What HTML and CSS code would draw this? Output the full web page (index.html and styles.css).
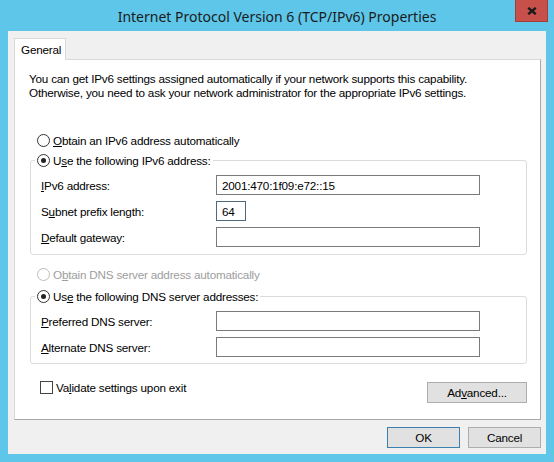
FILE: index.html
```html
<!DOCTYPE html>
<html lang="en">
<head>
  <meta charset="UTF-8">
  <title>Internet Protocol Version 6 (TCP/IPv6) Properties</title>
  <link rel="stylesheet" href="styles.css">
</head>
<body>
  <div class="window">
    <div class="titlebar">
      <h1 class="title">Internet Protocol Version 6 (TCP/IPv6) Properties</h1>
      <button class="close" title="Close">
        <svg width="10" height="8" viewBox="0 0 10 8"><path d="M1.2 0.8 L8.8 7.2 M8.8 0.8 L1.2 7.2" stroke="#1b1b1b" stroke-width="2.4" fill="none"/></svg>
      </button>
    </div>

    <div class="client">
      <div class="tabs">
        <div class="tab">General</div>
      </div>

      <div class="panel">
        <p class="intro">You can get IPv6 settings assigned automatically if your network supports this capability.<br>Otherwise, you need to ask your network administrator for the appropriate IPv6 settings.</p>

        <div class="option first"><span class="radio"></span><span><u>O</u>btain an IPv6 address automatically</span></div>

        <fieldset class="group">
          <legend><span class="option"><span class="radio checked"></span><span>U<u>s</u>e the following IPv6 address:</span></span></legend>
          <div class="fields">
            <div class="field"><label><u>I</u>Pv6 address:</label><input class="text" type="text" value="2001:470:1f09:e72::15"></div>
            <div class="field"><label>S<u>u</u>bnet prefix length:</label><input class="text short focus" type="text" value="64"></div>
            <div class="field"><label><u>D</u>efault gateway:</label><input class="text" type="text" value=""></div>
          </div>
        </fieldset>

        <div class="option dns disabled"><span class="radio"></span><span>O<u>b</u>tain DNS server address automatically</span></div>

        <fieldset class="group dns-group">
          <legend><span class="option"><span class="radio checked"></span><span>Us<u>e</u> the following DNS server addresses:</span></span></legend>
          <div class="fields">
            <div class="field"><label><u>P</u>referred DNS server:</label><input class="text" type="text" value=""></div>
            <div class="field"><label><u>A</u>lternate DNS server:</label><input class="text" type="text" value=""></div>
          </div>
        </fieldset>

        <div class="footer-row">
          <div class="option check-row"><span class="checkbox"></span><span>Va<u>l</u>idate settings upon exit</span></div>
          <button class="btn advanced">Ad<u>v</u>anced...</button>
        </div>
      </div>

      <div class="buttons">
        <button class="btn default">OK</button>
        <button class="btn">Cancel</button>
      </div>
    </div>
  </div>
</body>
</html>
```

FILE: styles.css
```css
body {
  margin: 0;
  background: #5ec6e9;
  font-family: "Liberation Sans", Arial, sans-serif;
  font-size: 11.7px;
  letter-spacing: -0.2px;
  color: #000;
}

.window {
  width: 554px;
  height: 462px;
  display: flex;
  flex-direction: column;
}

/* title bar */
.titlebar {
  height: 31px;
  flex-shrink: 0;
  display: grid;
  grid-template-columns: 1fr auto 1fr;
}
.title {
  grid-column: 2;
  align-self: center;
  margin: 2px 0 0;
  font-family: "Noto Sans", sans-serif;
  font-size: 14px;
  font-weight: 400;
  letter-spacing: 0;
  color: #1b1b1b;
}
.close {
  grid-column: 3;
  justify-self: end;
  align-self: start;
  width: 33px;
  height: 22px;
  margin-right: 6px;
  padding: 0;
  background: #c7504b;
  border: 1px solid #a23d39;
  border-top: none;
  display: flex;
  align-items: center;
  justify-content: center;
}

/* dialog body */
.client {
  flex: 1;
  margin: 0 8px 8px;
  padding: 7px 5px 6px 6px;
  background: #f0f0f0;
  display: flex;
  flex-direction: column;
}

.tabs {
  display: flex;
}
.tab {
  position: relative;
  z-index: 1;
  width: 52px;
  height: 22px;
  box-sizing: border-box;
  margin-bottom: -1px;
  padding-left: 6px;
  line-height: 21px;
  background: #fff;
  border: 1px solid #d9d9d9;
  border-bottom: none;
}

.panel {
  height: 361px;
  box-sizing: border-box;
  padding: 12px 13px 0 14px;
  background: #fff;
  border: 1px solid #d9d9d9;
  border-right-color: #a8a8a8;
  border-bottom-color: #a8a8a8;
}

.intro {
  margin: 0;
  line-height: 14px;
}

.option {
  display: flex;
  align-items: center;
  gap: 3px;
  height: 16px;
  white-space: nowrap;
}
.first {
  margin: 32px 0 0 8px;
}
.dns {
  margin: 11px 0 0 8px;
}
.disabled {
  color: #9d9d9d;
}

.radio {
  width: 13px;
  height: 13px;
  box-sizing: border-box;
  border: 1px solid #333;
  border-radius: 50%;
  background: #fff;
  display: grid;
  place-items: center;
}
.radio.checked::after {
  content: "";
  width: 5px;
  height: 5px;
  border-radius: 50%;
  background: #222;
}
.disabled .radio {
  border-color: #bdbdbd;
}

.group {
  margin: 4px 0 0 1px;
  padding: 0 0 7px;
  min-inline-size: 0;
  border: 1px solid #dcdcdc;
  border-radius: 3px;
}
.group legend {
  margin-left: 4px;
  padding: 0 2px;
}
.dns-group {
  margin-top: 6px;
  padding-bottom: 6px;
}

.fields {
  padding: 7px 0 0 10px;
}
.field {
  display: flex;
  align-items: center;
  height: 20px;
}
.field + .field {
  margin-top: 6px;
}
.field label {
  width: 175px;
}

.text {
  width: 264px;
  height: 20px;
  box-sizing: border-box;
  margin: 0;
  padding: 0 5px;
  border: 1px solid #7a7a7a;
  font: inherit;
  letter-spacing: inherit;
  color: #000;
  background: #fff;
  outline: none;
}
.text.short {
  width: 30px;
}
.text.focus {
  border-color: #51697d;
}

.footer-row {
  margin-top: 15px;
  display: flex;
  justify-content: space-between;
  align-items: flex-start;
}
.check-row {
  margin-left: 11px;
}
.checkbox {
  width: 13px;
  height: 13px;
  box-sizing: border-box;
  border: 1px solid #444;
  background: #fff;
}

.btn {
  width: 73px;
  height: 21px;
  padding: 0;
  background: #e1e1e1;
  border: 1px solid #adadad;
  font: inherit;
  letter-spacing: inherit;
  color: #000;
}
.btn.advanced {
  width: 100px;
  margin-top: 3px;
}
.btn.default {
  border-color: #3c7fb1;
}

.buttons {
  margin-top: 7px;
  display: flex;
  justify-content: flex-end;
  gap: 8px;
}
```
